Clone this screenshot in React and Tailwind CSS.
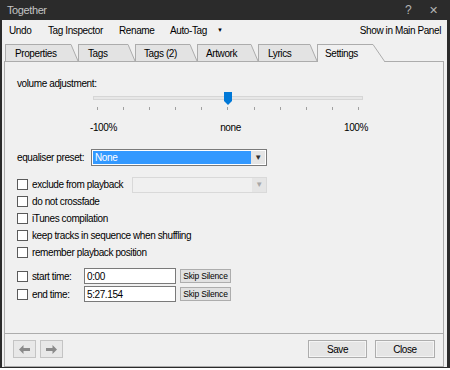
import React from "react";

const tabs = [
  { label: "Properties", w: 66, pl: 9 },
  { label: "Tags", w: 50, pl: 9 },
  { label: "Tags (2)", w: 55, pl: 8 },
  { label: "Artwork", w: 54, pl: 8 },
  { label: "Lyrics", w: 52, pl: 9 },
  { label: "Settings", w: 56, pl: 7, active: true },
];

const options = [
  "exclude from playback",
  "do not crossfade",
  "iTunes compilation",
  "keep tracks in sequence when shuffling",
  "remember playback position",
];

const Tab = ({ label, w, pl, active }) => {
  const slant = active ? 12 : 7;
  const h = active ? 18 : 17;
  const fill = active ? "#f0f0f0" : "#e3e3e3";
  return (
    <div className={`flex ${active ? "relative z-10 -mb-px" : ""}`}>
      <div
        className={`flex items-center border-l border-t border-[#acacac] ${
          active ? "h-[18px] bg-[#f0f0f0] pb-px" : "h-[17px] bg-[#e3e3e3]"
        }`}
        style={{ width: w, paddingLeft: pl }}
      >
        {label}
      </div>
      <svg width={slant} height={h} className="block">
        <polygon points={`0,0 ${slant},${h} 0,${h}`} fill={fill} />
        <line x1="0" y1="0.5" x2={slant} y2={h} stroke="#acacac" strokeWidth="1" />
      </svg>
    </div>
  );
};

const Checkbox = () => (
  <div className="w-[11px] h-[11px] border border-[#5a5a5a] bg-white shrink-0" />
);

const Arrow = ({ dir }) => (
  <svg width="11" height="9" viewBox="0 0 11 9">
    {dir === "left" ? (
      <path d="M0 4.5 L4.5 0 L4.5 3 L11 3 L11 6 L4.5 6 L4.5 9 Z" fill="#8a8a8a" />
    ) : (
      <path d="M11 4.5 L6.5 0 L6.5 3 L0 3 L0 6 L6.5 6 L6.5 9 Z" fill="#8a8a8a" />
    )}
  </svg>
);

const App = () => {
  return (
    <div className="w-[450px] h-[370px] bg-white font-['Liberation_Sans',Arial,sans-serif] text-[10px] tracking-[-0.4px] text-black overflow-hidden">
      <div className="h-[368px] bg-[#2b2b2b] pl-[2px] pr-[3px] pb-px flex flex-col">
        {/* title bar */}
        <div className="h-[20px] flex items-center pl-[5px] text-[#c4c4c4] text-[11px]">
          <span>Together</span>
          <span className="ml-auto w-[24px] text-[12px] text-[#b4b4b4]">?</span>
          <span className="w-[18px] text-[11px] text-[#b4b4b4]">✕</span>
        </div>

        <div className="flex-1 bg-[#f0f0f0] flex flex-col">
          {/* menu bar */}
          <div className="h-[20px] flex items-center pl-[7px] pr-[6px]">
            <span className="w-[39px]">Undo</span>
            <span className="w-[71px]">Tag Inspector</span>
            <span className="w-[51px]">Rename</span>
            <span className="w-[47px]">Auto-Tag</span>
            <span className="text-[6px]">▼</span>
            <span className="ml-auto">Show in Main Panel</span>
          </div>

          {/* tabs */}
          <div className="mt-[4px] h-[17px] flex items-end pl-[3px]">
            {tabs.map((t) => (
              <Tab key={t.label} {...t} />
            ))}
          </div>

          {/* panel */}
          <div className="flex-1 ml-[2px] mr-[3px] border border-[#acacac] flex flex-col">
            <div className="h-[272px] border-b border-[#acacac] pt-[16px] px-[12px] flex flex-col">
              <div className="h-[12px] leading-[12px]">volume adjustment:</div>

              {/* slider */}
              <div className="mt-px ml-[76px] w-[270px] h-[20px] relative flex flex-col">
                <div className="mt-[5px] h-[4px] bg-[#e7e7e7] border border-[#d6d6d6]" />
                <div className="mt-[7px] px-[4px] flex justify-between">
                  {Array.from({ length: 11 }).map((_, i) => (
                    <div key={i} className="w-px h-[3px] bg-[#a0a0a0]" />
                  ))}
                </div>
                <svg width="8" height="13" className="absolute left-[131px] top-px">
                  <polygon points="0,0 8,0 8,9 4,13 0,9" fill="#0078d7" />
                </svg>
              </div>

              <div className="mt-[11px] ml-[73px] w-[278px] h-[12px] leading-[12px] flex justify-between">
                <span>-100%</span>
                <span>none</span>
                <span>100%</span>
              </div>

              {/* equaliser */}
              <div className="mt-[15px] h-[17px] flex items-center">
                <span className="w-[74px]">equaliser preset:</span>
                <div className="w-[176px] h-[17px] border border-[#7a7a7a] bg-white flex p-px">
                  <div className="flex-1 bg-[#3399ff] text-white pl-[2px] flex items-center">None</div>
                  <div className="w-[14px] bg-[#e5e5e5] flex items-center justify-center text-[8px] text-[#333]">▼</div>
                </div>
              </div>

              {/* options */}
              <div className="mt-[10px] flex flex-col">
                {options.map((o, i) => (
                  <div key={o} className="h-[17px] flex items-center">
                    <Checkbox />
                    <span className="ml-[4px] w-[100px] whitespace-nowrap">{o}</span>
                    {i === 0 && (
                      <div className="w-[135px] h-[16px] border border-[#d9d9d9] bg-[#f0f0f0] flex justify-end">
                        <div className="w-[14px] bg-[#e5e5e5] flex items-center justify-center text-[8px] text-[#a8a8a8]">▼</div>
                      </div>
                    )}
                  </div>
                ))}
              </div>

              {/* times */}
              <div className="mt-[7px] flex flex-col gap-[2px]">
                {[
                  ["start time:", "0:00"],
                  ["end time:", "5:27.154"],
                ].map(([label, value]) => (
                  <div key={label} className="h-[16px] flex items-center">
                    <Checkbox />
                    <span className="ml-[4px] w-[52px]">{label}</span>
                    <div className="w-[92px] h-[16px] border border-[#7a7a7a] bg-white pl-[2px] flex items-center">
                      {value}
                    </div>
                    <div className="ml-[4px] w-[51px] h-[14px] border border-[#adadad] bg-[#e1e1e1] text-[8.5px] tracking-[-0.2px] flex items-center justify-center">
                      Skip Silence
                    </div>
                  </div>
                ))}
              </div>
            </div>

            {/* bottom bar */}
            <div className="flex-1 pt-[6px] px-[8px] flex items-start">
              <div className="w-[23px] h-[18px] border border-[#c4c4c4] bg-[#e8e8e8] flex items-center justify-center">
                <Arrow dir="left" />
              </div>
              <div className="ml-[4px] w-[23px] h-[18px] border border-[#c4c4c4] bg-[#e8e8e8] flex items-center justify-center">
                <Arrow dir="right" />
              </div>
              <div className="ml-auto w-[59px] h-[18px] border border-[#adadad] bg-[#e5e5e5] shadow-[inset_0_0_0_1px_#f4f4f4] flex items-center justify-center">
                Save
              </div>
              <div className="ml-[8px] w-[60px] h-[18px] border border-[#adadad] bg-[#e5e5e5] shadow-[inset_0_0_0_1px_#f4f4f4] flex items-center justify-center">
                Close
              </div>
            </div>
          </div>
        </div>
      </div>
    </div>
  );
};

export default App;
